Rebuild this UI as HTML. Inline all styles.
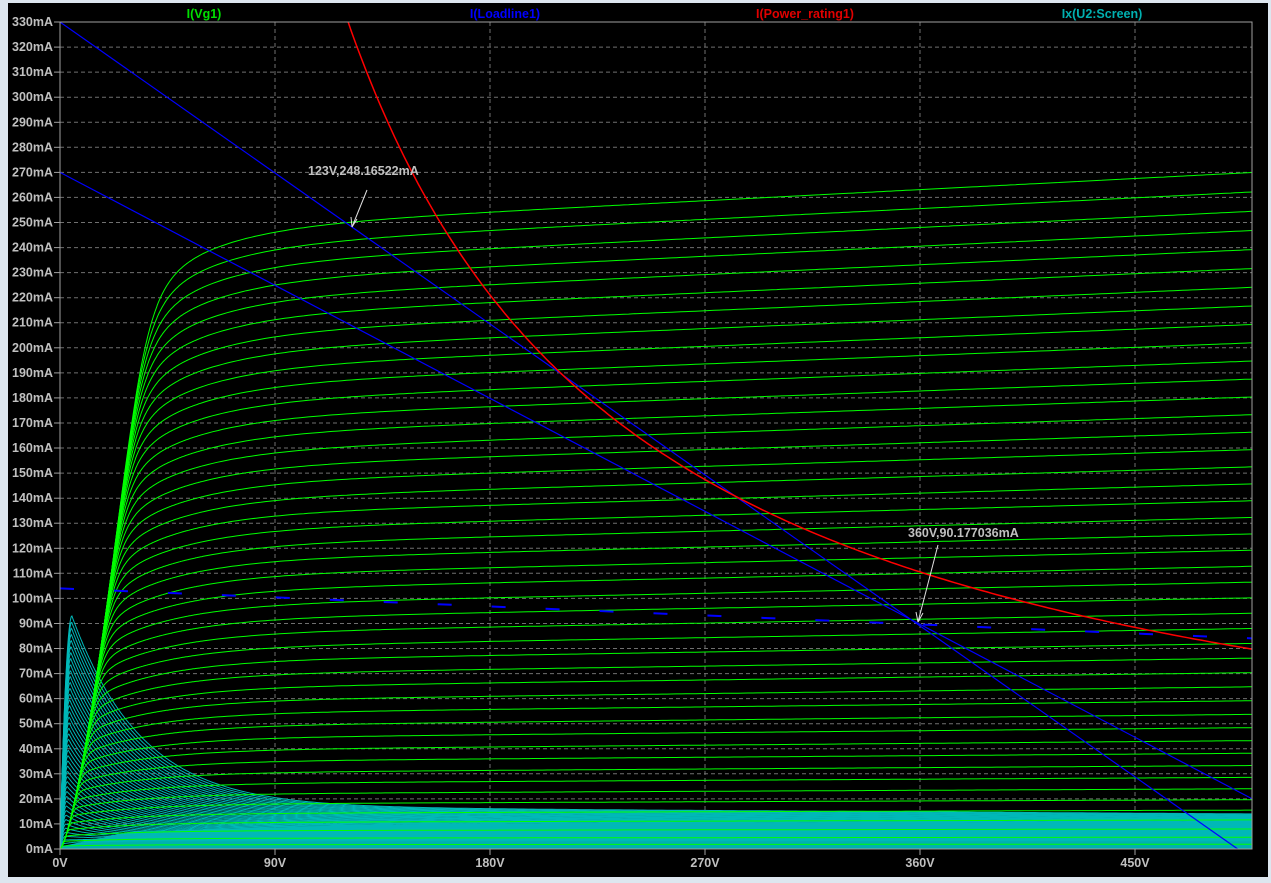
<!DOCTYPE html>
<html><head><meta charset="utf-8"><style>
html,body{margin:0;padding:0;background:#dde6ef;width:1271px;height:883px;overflow:hidden}
svg{position:absolute;left:0;top:0}
text{font-family:"Liberation Sans",sans-serif;font-weight:bold;font-size:12.5px}
</style></head><body>
<svg id="s" width="1271" height="883" xmlns="http://www.w3.org/2000/svg">
<rect x="8" y="3" width="1260" height="874" fill="#000"/>
<defs><clipPath id="c"><rect x="60" y="22" width="1192" height="827"/></clipPath></defs>
<g id="grid"></g>
<g id="curves" clip-path="url(#c)"></g>
<rect x="60" y="22" width="1192" height="827" fill="none" stroke="#a0a0a0" stroke-width="1"/>
<g id="labels" fill="#c0c0c0"></g>
<text x="204" y="18" fill="#00e000" text-anchor="middle">I(Vg1)</text>
<text x="505" y="18" fill="#0000ff" text-anchor="middle">I(Loadline1)</text>
<text x="805" y="18" fill="#e00000" text-anchor="middle">I(Power_rating1)</text>
<text x="1102" y="18" fill="#00b0b0" text-anchor="middle">Ix(U2:Screen)</text>
<g id="ann"></g>
</svg>
<script>
const NS="http://www.w3.org/2000/svg";
const X=v=>60+v*2.3889, Y=i=>849-i*2.506;
function el(p,t,a,txt){const e=document.createElementNS(NS,t);for(const k in a)e.setAttribute(k,a[k]);if(txt!==undefined)e.textContent=txt;document.getElementById(p).appendChild(e);return e;}
for(let i=0;i<=33;i++){const y=Y(i*10).toFixed(1);
 if(i>0&&i<33) el("grid","line",{x1:60,x2:1252,y1:y,y2:y,stroke:"#707070","stroke-dasharray":"4,3","stroke-width":1});
 el("labels","line",{x1:54,x2:60,y1:y,y2:y,stroke:"#a0a0a0"});
 el("labels","text",{x:53,y:+y+4,"text-anchor":"end"},(i*10)+"mA");}
for(let k=0;k<=5;k++){const x=X(k*90).toFixed(1);
 if(k>0) el("grid","line",{x1:x,x2:x,y1:22,y2:849,stroke:"#707070","stroke-dasharray":"4,3"});
 el("labels","line",{x1:x,x2:x,y1:849,y2:855,stroke:"#a0a0a0"});
 el("labels","text",{x:x,y:867,"text-anchor":"middle"},(k*90)+"V");}
el("curves","path",{d:`M60 849 L60 ${Y(1)} L${X(30)} ${Y(7)} L${X(150)} ${Y(10)} L${X(500)} ${Y(11)} L1252 849 Z`,fill:"#00b0b0"});
const N=45;
function pathFrom(f,vmax){let d="";for(let v=0;v<=vmax;v+=(v<60?0.25:2)){const i=f(v);d+=(d?"L":"M")+X(v).toFixed(1)+" "+Y(i).toFixed(1);}return d;}
for(let k=1;k<=N;k++){const r=k/N,P=93*Math.pow(r,1.2),V0=2+3*r,F=3+14*r,tau=9+20*r;
 el("curves","path",{d:pathFrom(v=>v<V0?P*(v/V0)*(2-v/V0):F+(P-F)*Math.exp(-(v-V0)/tau)-(v/500)*3*r,500),fill:"none",stroke:"#00b8b8","stroke-width":1});}
for(let k=1;k<=N;k++){const r=k/N,T=270*Math.pow(r,1.3),a=0.0002,Is=T/(1+500*a);
 const f=v=>{if(v<=0)return 0;const s=Is*(1+a*v)*(1-0.3*Math.exp(-v/30)),R=1.51*Math.pow(v,1.4);return Math.pow(Math.pow(s,-6)+Math.pow(R,-6),-1/6);};
 el("curves","path",{d:pathFrom(f,500),fill:"none",stroke:"#00ff00","stroke-width":1});}
el("curves","line",{x1:X(0),y1:Y(330),x2:X(493),y2:Y(0),stroke:"#0000ff","stroke-width":1.2});
el("curves","line",{x1:X(0),y1:Y(270),x2:X(539),y2:Y(0),stroke:"#0000ff","stroke-width":1.2});
el("curves","line",{x1:X(0),y1:Y(104),x2:X(500),y2:Y(84),stroke:"#0000ff","stroke-width":2,"stroke-dasharray":"14,40"});
el("curves","path",{d:pathFrom(v=>v<100?400:39.8*1000/v,500).replace(/^M[^L]*L/,"M"),fill:"none",stroke:"#ff0000","stroke-width":1.5});
el("ann","text",{x:308,y:175,fill:"#c0c0c0"},"123V,248.16522mA");
el("ann","line",{x1:367,y1:190,x2:352,y2:227,stroke:"#e0e0e0"});
el("ann","path",{d:"M352 227 L351 217 M352 227 L357 219",stroke:"#e0e0e0",fill:"none"});
el("ann","text",{x:908,y:537,fill:"#c0c0c0"},"360V,90.177036mA");
el("ann","line",{x1:938,y1:545,x2:918,y2:622,stroke:"#e0e0e0"});
el("ann","path",{d:"M918 622 L916 612 M918 622 L923 613",stroke:"#e0e0e0",fill:"none"});
</script>
</body></html>
